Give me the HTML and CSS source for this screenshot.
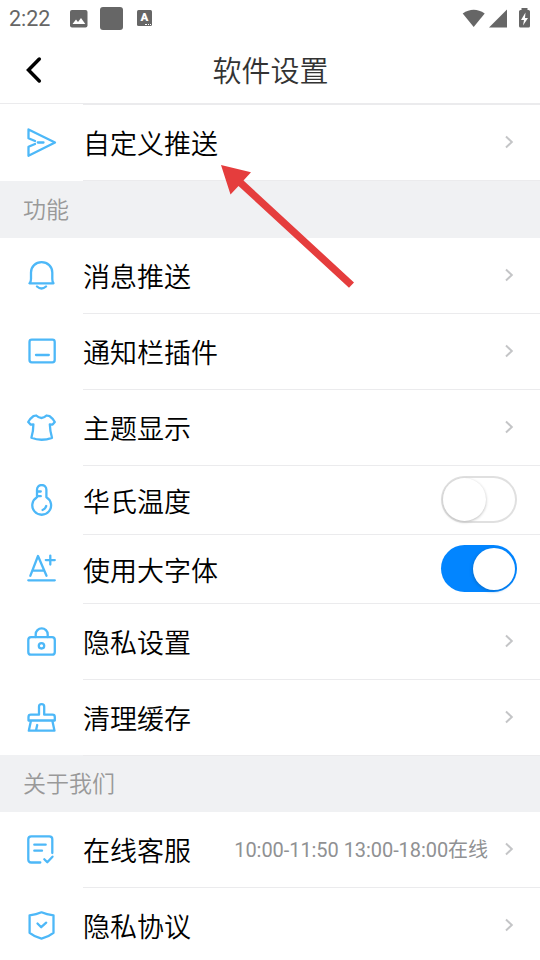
FILE: index.html
```html
<!DOCTYPE html>
<html lang="zh-CN">
<head>
<meta charset="utf-8">
<title>软件设置</title>
<link rel="stylesheet" href="styles.css">
</head>
<body>
<svg class="defs" width="0" height="0"><defs>
  <symbol id="chev" viewBox="0 0 10 14"><path d="M2 1.5 7.8 7 2 12.5" fill="none" stroke="#c4c5c7" stroke-width="2"/></symbol>
</defs></svg>
<div class="status">
  <span class="time">2:22</span>
  <svg class="pic" width="18" height="18" viewBox="0 0 18 18"><rect width="17.5" height="17.5" rx="2" fill="#666"/><path d="M2.5 14 6 9.5 8 12 11 8 15.3 14z" fill="#fff"/></svg>
  <span class="square"></span>
  <span class="abadge">A<i></i></span>
  <svg class="signals" width="70" height="22" viewBox="0 0 70 22" fill="#666"><path d="M2.700 5.500Q13.700-2 24.700 5.500L13.700 19z"/><path d="M47 1.500V19.500H29z"/><path d="M61.500 0H67.500V2H68.500Q70 2 70 3.500V18Q70 19.500 68.500 19.500H60.500Q59 19.500 59 18V3.500Q59 2 60.500 2H61.500z"/><path d="M65.500 4.500 61 12H64L63 17.500 68 10H65z" fill="#fff"/></svg>
</div>
<header class="header">
  <svg class="back" width="20" height="30" viewBox="0 0 20 30"><path d="M14.300 4 3.500 15 14.300 26" fill="none" stroke="#000" stroke-width="3.500" stroke-linecap="round"/></svg>
  <h1>软件设置</h1>
</header>
<main>
  <div class="row first"><svg class="icon" viewBox="0 0 32 31"><path d="M10 14 3.500 11.200V2.500L30 15.500 3.500 28.700V19.800L10 17M12.800 15.500H18.500"/></svg><div class="body"><span class="label">自定义推送</span><svg class="chev"><use href="#chev"/></svg></div></div>
  <h2>功能</h2>
  <div class="row"><svg class="icon" viewBox="0 0 32 31"><path d="M4.500 23.300H28.500Q27.300 22 27.300 19V12.500C27.300 6.500 22.600 2.200 16.600 2.200S6 6.500 6 12.500V19Q6 22 4.500 23.300zM12 26.500Q16.500 30.500 21 26.500"/></svg><div class="body"><span class="label">消息推送</span><svg class="chev"><use href="#chev"/></svg></div></div>
  <div class="row"><svg class="icon" viewBox="0 0 32 31"><rect x="4.500" y="3.700" width="25.200" height="22.600" rx="2.200"/><path d="M11 19H23.800"/></svg><div class="body"><span class="label">通知栏插件</span><svg class="chev"><use href="#chev"/></svg></div></div>
  <div class="row"><svg class="icon" viewBox="0 0 32 31"><path d="M11.200 3.500Q16.500 8.500 21.500 3.500L24.700 4.200Q28 6.500 29.800 10L27.600 12.600 24.800 12.300Q25 19 27 25.800Q16.500 29.700 6.400 25.800Q8.400 19 8.400 12.300L5.700 12.600 3.200 10Q5 6.500 8.300 4.200z"/></svg><div class="body"><span class="label">主题显示</span><svg class="chev"><use href="#chev"/></svg></div></div>
  <div class="row short"><svg class="icon" viewBox="0 0 32 32"><path d="M12 13.200V5.700A4.700 4.700 0 0 1 21.400 5.700V13.200A9.400 9.400 0 1 1 12 13.200M12.500 7.500H15.800M12.500 12.200H15.800M17.500 26Q20.500 25 21.200 22"/></svg><div class="body"><span class="label">华氏温度</span><span class="toggle"><b></b></span></div></div>
  <div class="row short"><svg class="icon" viewBox="0 0 32 32"><path d="M5.300 22.800 13 3 21.500 22.800M8 17.700H19M25.300 2.600V11.600M20.800 7.100H29.800M3.300 27.300H29.800"/></svg><div class="body"><span class="label">使用大字体</span><span class="toggle on"><b></b></span></div></div>
  <div class="row"><svg class="icon" viewBox="0 0 32 31"><rect x="3.300" y="11.200" width="26.500" height="17.500" rx="2.800"/><path d="M10.700 11V8.400A6 6 0 0 1 22.700 8.400V11"/><circle cx="16.500" cy="19.800" r="2.700"/></svg><div class="body"><span class="label">隐私设置</span><svg class="chev"><use href="#chev"/></svg></div></div>
  <div class="row"><svg class="icon" viewBox="0 0 32 31"><path d="M14 12.700V4.800A2.600 2.600 0 0 1 19.200 4.800V12.700H27.500Q29.800 12.700 29.800 15V18.500H3.500V15Q3.500 12.700 5.800 12.700zM6 18.500 3.800 28.700H29.500L27.300 18.500M12.200 23 11 28.500"/></svg><div class="body"><span class="label">清理缓存</span><svg class="chev"><use href="#chev"/></svg></div></div>
  <h2 class="about">关于我们</h2>
  <div class="row"><svg class="icon" viewBox="0 0 32 31"><path d="M15.300 28.500H6.300Q3.300 28.500 3.300 25.500V5.300Q3.300 2.300 6.300 2.300H24.300Q27.300 2.300 27.300 5.300V19M9.300 10.700H20.700M9.300 16.700H17M19.300 25.200 22.300 28.200 27.500 22.700"/></svg><div class="body"><span class="label">在线客服</span><span class="hours">10:00-11:50 13:00-18:00在线</span><svg class="chev"><use href="#chev"/></svg></div></div>
  <div class="row"><svg class="icon" viewBox="0 0 32 31"><path d="M16.500 2.300Q21.500 4.600 28.500 5.300V22.800Q23.500 26.800 16.500 28.600Q9.500 26.800 4.600 22.800V5.300Q11.500 4.600 16.500 2.300zM12.500 13.500 16.200 17.200 21.200 12.700"/></svg><div class="body"><span class="label">隐私协议</span><svg class="chev"><use href="#chev"/></svg></div></div>
</main>
<svg class="arrow" width="136" height="126" viewBox="220 163 136 126"><path d="M221 165 251 172.300 243.500 180.500 354 282.500 349 287.700 238.500 186 230.500 194.500z" fill="#e53d3d"/></svg>
</body>
</html>
```
FILE: styles.css
```css
* { box-sizing: border-box; }
html, body { height: 960px; overflow: hidden; }
body {
  position: relative;
  margin: 0;
  background: #fff;
  color: #000;
  font-family: Roboto, "Noto Sans CJK SC", sans-serif;
}
.defs { position: absolute; }
.status { display: flex; align-items: center; height: 37px; padding-left: 9px; color: #666; }
.time { width: 61px; font-size: 21.500px; line-height: 37px; }
.pic { width: 18px; margin-top: 0; }
.square { width: 23px; height: 23px; margin-left: 12px; background: #666; border-radius: 3px; }
.abadge {
  position: relative;
  width: 15px;
  height: 16px;
  margin: 0 0 1px 14px;
  background: #666;
  border-radius: 1.500px;
  color: #fff;
  font-size: 11.500px;
  font-weight: 900;
  line-height: 15px;
  text-align: center;
}
.abadge i { position: absolute; right: 1px; bottom: 1px; width: 6px; border-bottom: 1px dotted #fff; }
.signals { margin: 1px 10px 0 auto; }
.header { display: grid; grid-template-columns: 83px 1fr 83px; align-items: center; height: 67px; border-bottom: 1px solid #ebebed; }
.back { margin-left: 25px; }
h1 { margin: 0; padding: 0 0 2px 1px; color: #333; font-family: "Noto Sans CJK SC", sans-serif; font-size: 29px; font-weight: 350; line-height: 62px; text-align: center; }
.row { display: flex; align-items: center; height: 76px; padding-left: 25px; }
.row.first { height: 77px; }
.row.short { height: 69px; }
.icon {
  flex: none;
  width: 32px;
  height: 31px;
  margin-right: 26px;
  margin-bottom: 1px;
  fill: none;
  stroke: #4db8f8;
  stroke-width: 2.300;
  stroke-linecap: round;
  stroke-linejoin: round;
}
.short .icon { height: 32px; }
.body { display: flex; flex: 1; align-items: center; height: 100%; border-bottom: 1px solid #ebebed; padding-right: 26px; }
.first .body { border-top: 1px solid #ebebed; }
.label { font-family: "Noto Sans CJK SC", sans-serif; font-size: 27px; font-weight: 350; line-height: 40px; white-space: nowrap; }
.short .label { padding-top: 2px; }
.chev { width: 10px; height: 14px; margin: 0 0 2px auto; }
.hours { margin: 0 0 3px auto; color: #909193; font-size: 20px; letter-spacing: -.06px; white-space: nowrap; }
.hours + .chev { margin-left: 16px; }
h2 { height: 57px; margin: 0; padding: 0 0 0 23px; background: #f0f1f3; color: #999; font-family: "Noto Sans CJK SC", sans-serif; font-size: 23px; font-weight: 350; line-height: 55px; }
h2.about { margin-top: -1px; }
.toggle { width: 76px; height: 47px; margin: 0 -3px 1px auto; padding: 2px 0 0 2px; border-radius: 24px; box-shadow: inset 0 0 0 2px #e0e0e0; }
.toggle b { display: block; width: 43px; height: 43px; border-radius: 50%; background: #fff; box-shadow: 0 1px 3px #bbb; }
.toggle.on { background: #0285ff; box-shadow: none; padding: 2.500px 0 0 31.500px; }
.toggle.on b { width: 42px; height: 42px; box-shadow: -1px 1px 3px #0871d2; }
.arrow { position: absolute; left: 220px; top: 163px; }
```
